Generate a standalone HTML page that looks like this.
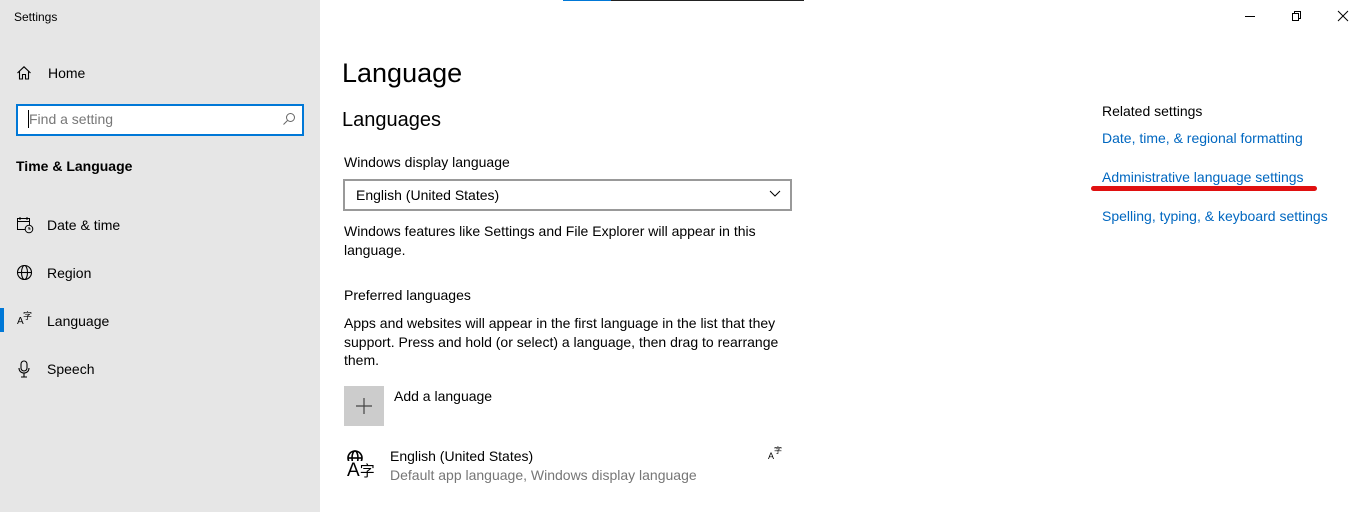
<!DOCTYPE html>
<html><head><meta charset="utf-8"><style>
*{margin:0;padding:0;box-sizing:border-box}
body{width:1366px;height:512px;overflow:hidden;background:#fff;font-family:"Liberation Sans","Noto Sans CJK SC",sans-serif;color:#000;position:relative}
.a{position:absolute;white-space:nowrap}
#side{position:absolute;left:0;top:0;width:320px;height:512px;background:#e6e6e6}
.nav{font-size:14px}
.lnk{color:#0067c0;font-size:14px}
</style></head><body>
<div id="side">
<div class="a" style="left:14px;top:10px;font-size:12px">Settings</div>
<svg class="a" style="left:16px;top:65px" width="16" height="16" viewBox="0 0 16 16" fill="none" stroke="#000" stroke-width="1.1"><path d="M1.5 8 L8 1.8 L14.5 8 M3.5 6.2 V14 H6.5 V9.5 H9.5 V14 H12.5 V6.2"/></svg>
<div class="a nav" style="left:48px;top:65px">Home</div>
<div class="a" style="left:16px;top:104px;width:288px;height:32px;border:2px solid #0078d7;background:#fff"></div>
<div class="a" style="left:28px;top:110px;width:1px;height:18px;background:#000"></div>
<div class="a" style="left:29px;top:111px;font-size:14px;color:#777">Find a setting</div>
<svg class="a" style="left:282px;top:112px" width="14" height="14" viewBox="0 0 14 14" fill="none" stroke="#666" stroke-width="1"><circle cx="8.5" cy="5.5" r="4"/><path d="M5.5 8.5 L1.5 12.5"/></svg>
<div class="a" style="left:16px;top:158px;font-size:14px;font-weight:bold">Time &amp; Language</div>
<svg class="a" style="left:16px;top:216px" width="18" height="18" viewBox="0 0 18 18" fill="none" stroke="#000" stroke-width="1"><rect x="1.5" y="2.5" width="12" height="11"/><path d="M1.5 5.5H13.5M4 1v3M11 1v3"/><circle cx="13" cy="13" r="3.8" fill="#e6e6e6"/><path d="M13 11v2h1.5"/></svg>
<div class="a nav" style="left:47px;top:217px">Date &amp; time</div>
<svg class="a" style="left:16px;top:264px" width="17" height="17" viewBox="0 0 17 17" fill="none" stroke="#000" stroke-width="1.1"><circle cx="8.5" cy="8.5" r="7"/><ellipse cx="8.5" cy="8.5" rx="3" ry="7"/><path d="M1.5 8.5H15.5"/></svg>
<div class="a nav" style="left:47px;top:265px">Region</div>
<div class="a" style="left:0;top:308px;width:4px;height:24px;background:#0078d7"></div>
<div class="a" style="left:17px;top:316px;font-size:10px">A</div>
<div class="a" style="left:23px;top:309px;font-size:9px">字</div>
<div class="a nav" style="left:47px;top:313px">Language</div>
<svg class="a" style="left:17px;top:360px" width="14" height="18" viewBox="0 0 14 18" fill="none" stroke="#000" stroke-width="1.1"><rect x="4" y="1" width="6" height="10" rx="3"/><path d="M2 8c0 3 2 5 5 5s5-2 5-5M7 13v4M4 17h6"/></svg>
<div class="a nav" style="left:47px;top:361px">Speech</div>
</div>
<div class="a" style="left:563px;top:0;width:48px;height:1px;background:#0078d7"></div>
<div class="a" style="left:611px;top:0;width:193px;height:1px;background:#222"></div>
<div class="a" style="left:1245px;top:16px;width:10px;height:1px;background:#000"></div>
<svg class="a" style="left:1291px;top:10px" width="12" height="12" viewBox="0 0 12 12" fill="none" stroke="#000" stroke-width="1"><rect x="1.5" y="3.5" width="6" height="7"/><path d="M3.5 3.5V1.5H9.5V8.5H7.5"/></svg>
<svg class="a" style="left:1337px;top:10px" width="12" height="12" viewBox="0 0 12 12" stroke="#000" stroke-width="1"><path d="M1 1L11 11M11 1L1 11"/></svg>
<div class="a" style="left:342px;top:58px;font-size:27px">Language</div>
<div class="a" style="left:342px;top:109px;font-size:20px">Languages</div>
<div class="a" style="left:344px;top:154px;font-size:14px">Windows display language</div>
<div class="a" style="left:343px;top:179px;width:449px;height:32px;border:2px solid #999"></div>
<div class="a" style="left:356px;top:187px;font-size:14px">English (United States)</div>
<svg class="a" style="left:769px;top:190px" width="12" height="8" viewBox="0 0 12 8" fill="none" stroke="#000" stroke-width="1"><path d="M1 1L6 6L11 1"/></svg>
<div class="a" style="left:344px;top:222px;font-size:14px;line-height:19px;white-space:normal;width:450px">Windows features like Settings and File Explorer will appear in this language.</div>
<div class="a" style="left:344px;top:287px;font-size:14px">Preferred languages</div>
<div class="a" style="left:344px;top:314px;font-size:14px;line-height:18.5px;white-space:normal;width:450px">Apps and websites will appear in the first language in the list that they support. Press and hold (or select) a language, then drag to rearrange them.</div>
<div class="a" style="left:344px;top:386px;width:40px;height:40px;background:#ccc"></div>
<svg class="a" style="left:355px;top:397px" width="18" height="18" viewBox="0 0 18 18" stroke="#444" stroke-width="1.2"><path d="M9 1V17M1 9H17"/></svg>
<div class="a" style="left:394px;top:388px;font-size:14px">Add a language</div>
<svg class="a" style="left:346px;top:450px" width="20" height="18" viewBox="0 0 20 18" fill="none" stroke="#000" stroke-width="1.6"><circle cx="9" cy="8" r="7"/><ellipse cx="9" cy="8" rx="3" ry="7"/><path d="M2 8H16"/></svg>
<div class="a" style="left:347px;top:461px;font-size:19px;background:#fff;line-height:20px">A<span style="font-size:15px">字</span></div>
<div class="a" style="left:390px;top:448px;font-size:14px">English (United States)</div>
<div class="a" style="left:390px;top:467px;font-size:14px;color:#767676">Default app language, Windows display language</div>
<div class="a" style="left:768px;top:451px;font-size:9px">A</div>
<div class="a" style="left:774px;top:445px;font-size:8px">字</div>
<div class="a" style="left:1102px;top:103px;font-size:14px">Related settings</div>
<div class="a lnk" style="left:1102px;top:130px">Date, time, &amp; regional formatting</div>
<div class="a lnk" style="left:1102px;top:169px">Administrative language settings</div>
<div class="a" style="left:1091px;top:186px;width:226px;height:5px;background:#e01010;border-radius:3px"></div>
<div class="a lnk" style="left:1102px;top:208px">Spelling, typing, &amp; keyboard settings</div>
</body></html>
